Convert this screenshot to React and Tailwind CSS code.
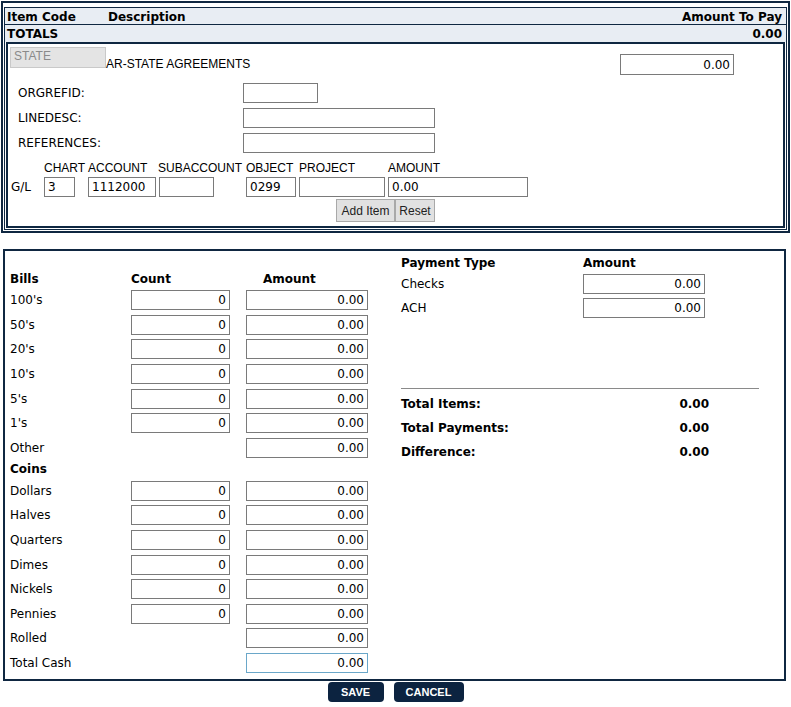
import React from 'react';

const verdana = "font-['DejaVu_Sans',Verdana,sans-serif]";
const arial = "font-['Liberation_Sans',Arial,sans-serif]";

function Field({ value = '', className = '', right = false, focus = false }) {
  return (
    <input
      readOnly
      value={value}
      className={`${verdana} text-[12px] text-black bg-white border ${focus ? 'border-[#6aa7c9]' : 'border-[#7a7a7a]'} outline-none px-[3px] ${right ? 'text-right' : 'text-left'} ${className}`}
    />
  );
}

function CashRow({ label, count = true, focus = false }) {
  return (
    <div className="flex items-center h-[24.6px]">
      <div className="w-[121px]">{label}</div>
      {count ? (
        <Field value="0" right className="w-[99px] h-[20px]" />
      ) : (
        <div className="w-[99px]" />
      )}
      <Field value="0.00" right focus={focus} className="ml-[16px] w-[122px] h-[20px]" />
    </div>
  );
}

function App() {
  const bills = ["100's", "50's", "20's", "10's", "5's", "1's"];
  const coins = ['Dollars', 'Halves', 'Quarters', 'Dimes', 'Nickels', 'Pennies'];

  return (
    <div className={`${verdana} text-[12px] text-black bg-white w-[791px] h-[707px] pt-[1px]`}>
      {/* Item entry */}
      <div className="ml-[1px] w-[789px] border-2 border-[#0f2741] pt-[4px] px-[1px] pb-[1px]">
        <div className="border border-[#0f2741] pb-[1px]">
          <div className="flex h-[17px] items-center bg-[#e8edf3] border-b border-[#0f2741] font-bold pl-[2px] pr-[4px] pt-[1px]">
            <div className="w-[101px]">Item Code</div>
            <div>Description</div>
            <div className="ml-auto">Amount To Pay</div>
          </div>
          <div className="flex h-[17px] items-center bg-[#e8edf3] font-bold pl-[2px] pr-[4px]">
            <div>TOTALS</div>
            <div className="ml-auto">0.00</div>
          </div>

          <div className="mx-[1px] border-2 border-[#0f2741] pt-[3px] pb-[4px]">
            <div className="flex items-start h-[33px]">
              <div className={`${arial} ml-[2px] w-[96px] h-[21px] bg-[#e4e4e4] border border-[#c9c9c9] text-[#8a8a8a] pl-[3px] leading-[16px]`}>
                STATE
              </div>
              <div className={`${arial} mt-[10px] leading-[14px]`}>AR-STATE AGREEMENTS</div>
              <Field value="0.00" right className="ml-auto mr-[49px] mt-[7px] w-[114px] h-[21px]" />
            </div>

            {[
              ['ORGREFID:', 'w-[75px]'],
              ['LINEDESC:', 'w-[192px]'],
              ['REFERENCES:', 'w-[192px]'],
            ].map(([label, w]) => (
              <div key={label} className="flex items-center h-[25px]">
                <div className="w-[235px] pl-[10px]">{label}</div>
                <Field className={`${w} h-[20px]`} />
              </div>
            ))}

            <div className={`${arial} grid grid-cols-[36px_44px_70px_88px_53px_89px_140px] h-[22px] items-end pb-[2px] leading-[14px]`}>
              <div />
              <div>CHART</div>
              <div>ACCOUNT</div>
              <div>SUBACCOUNT</div>
              <div>OBJECT</div>
              <div>PROJECT</div>
              <div>AMOUNT</div>
            </div>
            <div className="grid grid-cols-[36px_44px_70px_88px_53px_89px_140px] h-[20px] items-center">
              <div className="pl-[3px]">G/L</div>
              <Field value="3" className="w-[31px] h-[20px]" />
              <Field value="1112000" className="w-[68px] h-[20px]" />
              <Field className="w-[55px] h-[20px] ml-[1px]" />
              <Field value="0299" className="w-[50px] h-[20px]" />
              <Field className="w-[86px] h-[20px]" />
              <Field value="0.00" className="w-[140px] h-[20px]" />
            </div>
            <div className={`${arial} flex mt-[2px] h-[23px] ml-[328px]`}>
              <button className="h-[23px] w-[59px] bg-[#e1e1e1] border border-[#a9a9a9] text-[12px] text-[#222]">
                Add Item
              </button>
              <button className="h-[23px] w-[40px] bg-[#e1e1e1] border border-[#a9a9a9] text-[12px] text-[#222]">
                Reset
              </button>
            </div>
          </div>
        </div>
      </div>

      {/* Cash count and payments */}
      <div className="mt-[16px] ml-[3px] w-[783px] border-2 border-[#0f2741] flex pb-[4px]">
        <div className="w-[396px] pl-[5px] pt-[19px]">
          <div className="flex items-center h-[18px] font-bold">
            <div className="w-[121px]">Bills</div>
            <div className="w-[132px]">Count</div>
            <div>Amount</div>
          </div>
          {bills.map((b) => (
            <CashRow key={b} label={b} />
          ))}
          <CashRow label="Other" count={false} />
          <div className="flex items-center h-[18.4px] font-bold">Coins</div>
          {coins.map((c) => (
            <CashRow key={c} label={c} />
          ))}
          <CashRow label="Rolled" count={false} />
          <CashRow label="Total Cash" count={false} focus />
        </div>

        <div className="pt-[3px]">
          <div className="flex items-center h-[18px] font-bold">
            <div className="w-[182px]">Payment Type</div>
            <div>Amount</div>
          </div>
          {['Checks', 'ACH'].map((p) => (
            <div key={p} className="flex items-center h-[24px]">
              <div className="w-[182px]">{p}</div>
              <Field value="0.00" right className="w-[122px] h-[20px]" />
            </div>
          ))}
          <div className="mt-[68px] w-[358px] border-t border-[#8a8a8a]" />
          <div className="mt-[3px] font-bold">
            {['Total Items:', 'Total Payments:', 'Difference:'].map((t) => (
              <div key={t} className="flex items-center h-[24px]">
                <div className="w-[270px]">{t}</div>
                <div className="w-[38px] text-right">0.00</div>
              </div>
            ))}
          </div>
        </div>
      </div>

      <div className={`${arial} flex justify-center gap-[10px] mt-[1px]`}>
        <button className="w-[56px] h-[20px] rounded-[4px] bg-[#0c2340] text-white font-bold text-[11px]">
          SAVE
        </button>
        <button className="w-[70px] h-[20px] rounded-[4px] bg-[#0c2340] text-white font-bold text-[11px]">
          CANCEL
        </button>
      </div>
    </div>
  );
}

export default App;
